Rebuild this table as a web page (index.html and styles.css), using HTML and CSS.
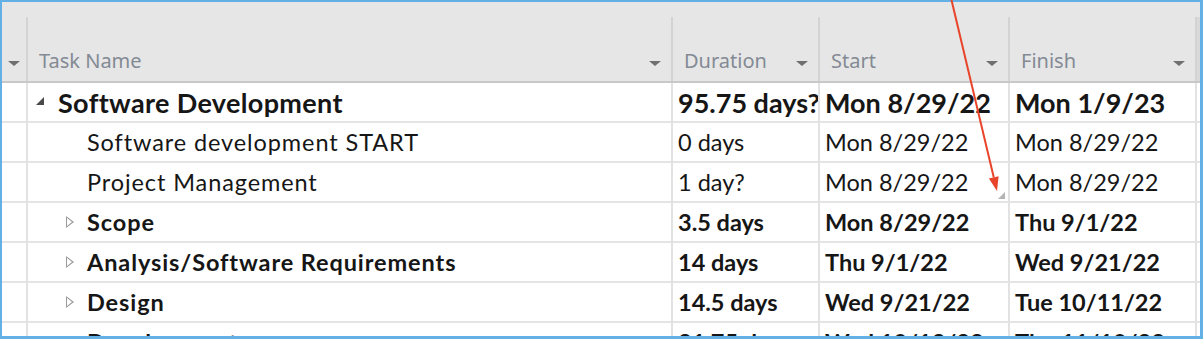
FILE: index.html
```html
<!DOCTYPE html>
<html>
<head>
<meta charset="utf-8">
<link rel="stylesheet" href="styles.css">
</head>
<body>
<div class="shot">
  <div class="frame">
    <div class="head">
      <div class="hc hc-sel"><span class="dd"></span></div>
      <div class="hc"><span class="hl">Task Name</span><span class="dd"></span></div>
      <div class="hc"><span class="hl">Duration</span><span class="dd"></span></div>
      <div class="hc"><span class="hl">Start</span><span class="dd"></span></div>
      <div class="hc"><span class="hl">Finish</span><span class="dd"></span></div>
      <div class="hc hc-end"></div>
    </div>

    <div class="row summary">
      <div class="c c-sel"></div>
      <div class="c name lvl1"><span class="tog open"></span>Software Development</div>
      <div class="c">95.75 days?</div>
      <div class="c">Mon 8/29/22</div>
      <div class="c">Mon 1/9/23</div>
      <div class="c c-end"></div>
    </div>

    <div class="row">
      <div class="c c-sel"></div>
      <div class="c name lvl2">Software development START</div>
      <div class="c">0 days</div>
      <div class="c">Mon 8/29/22</div>
      <div class="c">Mon 8/29/22</div>
      <div class="c c-end"></div>
    </div>

    <div class="row">
      <div class="c c-sel"></div>
      <div class="c name lvl2">Project Management</div>
      <div class="c">1 day?</div>
      <div class="c grip">Mon 8/29/22</div>
      <div class="c">Mon 8/29/22</div>
      <div class="c c-end"></div>
    </div>

    <div class="row bold">
      <div class="c c-sel"></div>
      <div class="c name lvl2t"><span class="tog shut"></span>Scope</div>
      <div class="c">3.5 days</div>
      <div class="c">Mon 8/29/22</div>
      <div class="c">Thu 9/1/22</div>
      <div class="c c-end"></div>
    </div>

    <div class="row bold">
      <div class="c c-sel"></div>
      <div class="c name lvl2t"><span class="tog shut"></span>Analysis/Software Requirements</div>
      <div class="c">14 days</div>
      <div class="c">Thu 9/1/22</div>
      <div class="c">Wed 9/21/22</div>
      <div class="c c-end"></div>
    </div>

    <div class="row bold">
      <div class="c c-sel"></div>
      <div class="c name lvl2t"><span class="tog shut"></span>Design</div>
      <div class="c">14.5 days</div>
      <div class="c">Wed 9/21/22</div>
      <div class="c">Tue 10/11/22</div>
      <div class="c c-end"></div>
    </div>

    <div class="row bold">
      <div class="c c-sel"></div>
      <div class="c name lvl2t"><span class="tog shut"></span>Development</div>
      <div class="c">21.75 days</div>
      <div class="c">Wed 10/12/22</div>
      <div class="c">Thu 11/10/22</div>
      <div class="c c-end"></div>
    </div>
  </div>

  <svg class="pointer" width="1203" height="339" viewBox="0 0 1203 339">
    <line x1="951" y1="-2" x2="993.8" y2="177.4" stroke="#e8442a" stroke-width="2"/>
    <polygon points="997,191 998.6,176.2 988.9,178.6" fill="#e8442a"/>
  </svg>
</div>
</body>
</html>
```

FILE: styles.css
```css
body {
  margin: 0;
  background: #ffffff;
}

.shot {
  position: relative;
  width: 1203px;
  height: 339px;
}

.frame {
  width: 1203px;
  height: 339px;
  box-sizing: border-box;
  border-style: solid;
  border-color: #62b0e6;
  border-width: 2px 3px 3px 2px;
  overflow: hidden;
  background: #ffffff;
}

.head,
.row {
  display: grid;
  grid-template-columns: 26px 645px 147px 190px 187px 1fr;
}

.head {
  height: 81px;
  box-sizing: border-box;
  padding-top: 15px;
  background: #e6e6e6;
  border-bottom: 2px solid #c8c8c8;
}

.hc {
  position: relative;
  display: flex;
  align-items: flex-end;
  justify-content: space-between;
  padding: 0 10px 7px 11px;
  border-right: 2px solid #d3d3d3;
  font-family: "Noto Sans", "Open Sans", sans-serif;
  font-size: 20px;
  line-height: 26px;
  color: #838a94;
}

.hc-sel {
  padding: 0 0 7px 6px;
}

.hc-end {
  border-right: none;
  background: #d9d9d9;
  padding: 0;
}

.dd {
  width: 0;
  height: 0;
  margin-bottom: 8px;
  border-left: 6px solid transparent;
  border-right: 6px solid transparent;
  border-top: 5px solid #6f6f6f;
}

.row {
  height: 40px;
}

.c {
  display: flex;
  align-items: center;
  box-sizing: border-box;
  padding-left: 5px;
  border-right: 2px solid #e2e2e2;
  border-bottom: 2px solid #e4e4e4;
  font-family: "Lato", "Liberation Sans", sans-serif;
  font-size: 23.5px;
  color: #161616;
  white-space: nowrap;
  overflow: hidden;
}

.name {
  letter-spacing: 0.9px;
}

.c-sel {
  padding: 0;
}

.c-end {
  border-right: none;
  padding: 0;
}

.summary .c,
.bold .c {
  font-weight: 700;
}

.summary .c {
  font-size: 27px;
}

.summary .name {
  letter-spacing: 0.35px;
}

.lvl1 {
  padding-left: 8px;
}

.lvl2 {
  padding-left: 59px;
}

.lvl2t {
  padding-left: 38px;
}

.tog {
  display: inline-block;
  flex: none;
}

.tog.open {
  width: 0;
  height: 0;
  margin-right: 14px;
  margin-top: -2px;
  border-left: 8px solid transparent;
  border-bottom: 8px solid #4a4a4a;
}

.tog.shut {
  position: relative;
  width: 8px;
  height: 12px;
  margin-right: 13px;
}

.tog.shut::before {
  content: "";
  position: absolute;
  left: 0;
  top: 0;
  border-top: 6px solid transparent;
  border-bottom: 6px solid transparent;
  border-left: 8px solid #9a9a9a;
}

.tog.shut::after {
  content: "";
  position: absolute;
  left: 1px;
  top: 2px;
  border-top: 4px solid transparent;
  border-bottom: 4px solid transparent;
  border-left: 5px solid #ffffff;
}

.grip {
  position: relative;
}

.grip::after {
  content: "";
  position: absolute;
  right: 3px;
  bottom: 2px;
  border-left: 7px solid transparent;
  border-bottom: 7px solid #b4b4b4;
}

.pointer {
  position: absolute;
  left: 0;
  top: 0;
  pointer-events: none;
}
```
